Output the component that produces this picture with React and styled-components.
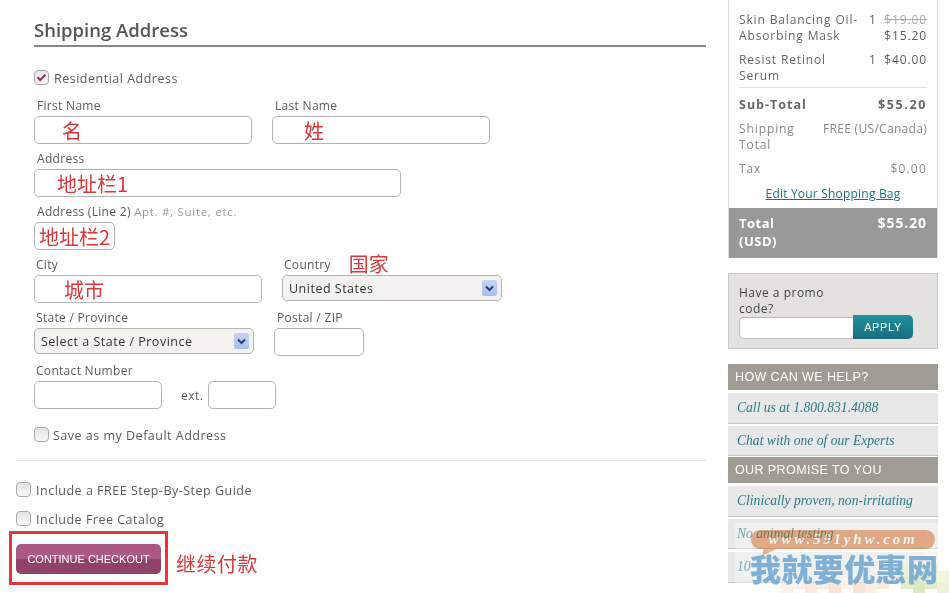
import React from 'react'
import styled, { createGlobalStyle } from 'styled-components'

const GlobalStyle = createGlobalStyle`
  html, body { margin: 0; padding: 0; background: #fff; }
  body {
    width: 950px;
    height: 593px;
    overflow: hidden;
    font-family: "Open Sans", "Noto Sans CJK SC", sans-serif;
    font-size: 12px;
    letter-spacing: .5px;
    color: #5a5a5a;
  }
  * { box-sizing: border-box; }
`

const cjk = '"Noto Sans CJK SC", "Liberation Sans", sans-serif'

const Page = styled.div`
  display: flex;
  align-items: flex-start;
  height: 593px;
  position: relative;
  overflow: hidden;
`

const Main = styled.main`
  width: 706px;
  padding-left: 16px;
  flex: none;
`

const AddressBlock = styled.div`
  padding-left: 18px;
`

const Heading = styled.h2`
  margin: 0;
  padding-top: 18px;
  height: 47px;
  border-bottom: 2px solid #888;
  font-size: 18.5px;
  line-height: 24px;
  font-weight: 600;
  letter-spacing: 0;
  color: #555;
`

const CheckRow = styled.label`
  display: flex;
  align-items: center;
  gap: ${p => p.$gap || 5}px;
  height: 16px;
  margin-top: ${p => p.$top}px;
  margin-bottom: ${p => p.$bottom || 0}px;
`

const Box = styled.span`
  width: 15px;
  height: 15px;
  flex: none;
  border: 1px solid #a9a9a9;
  border-radius: 4px;
  background: linear-gradient(#e6e4e2, #f8f7f6);
  display: flex;
  align-items: center;
  justify-content: center;
`

const CheckText = styled.span`
  position: relative;
  top: 1px;
  font-size: 12.5px;
`

const Row = styled.div`
  display: flex;
  gap: ${p => p.$gap ?? 20}px;
  align-items: flex-end;
  height: ${p => p.$height || 53}px;
`

const FieldWrap = styled.div`
  width: ${p => p.$width}px;
  align-self: flex-start;
`

const Label = styled.div`
  display: flex;
  align-items: center;
  height: 18px;
  padding: 0 0 4px ${p => p.$pad ?? 3}px;
  white-space: pre;
  letter-spacing: .3px;
`

const Hint = styled.span`
  color: #999;
  font-size: 11.5px;
  letter-spacing: .7px;
`

const Note = styled.span`
  font-family: ${cjk};
  font-size: ${p => p.$size || 20}px;
  line-height: 28px;
  letter-spacing: 0;
  color: #d8383c;
  white-space: nowrap;
`

const LabelNote = styled(Note)`
  margin-left: 18px;
  line-height: 14px;
  position: relative;
`

const Input = styled.div`
  height: 28px;
  border: 1px solid #b4b4b4;
  border-radius: 5px;
  background: #fff;
  padding-left: ${p => p.$pad || 0}px;
  overflow: hidden;
`

const Select = styled.div`
  height: 26px;
  border: 1px solid #b4b4b4;
  border-radius: 5px;
  background: #f3f2ee;
  padding: 0 4px 0 6px;
  display: flex;
  align-items: center;
  justify-content: space-between;
  color: #333;
  font-size: 12.5px;
`

const Arrow = styled.span`
  width: 15px;
  height: 16px;
  border-radius: 2px;
  background: linear-gradient(#c4d3f4, #a9c0ee);
  display: flex;
  align-items: center;
  justify-content: center;
`

const Ext = styled.span`
  width: 46px;
  height: 28px;
  padding: 9px 0 0 19px;
  line-height: 14px;
  flex: none;
`

const Divider = styled.hr`
  margin: 18px 0 0;
  border: 0;
  border-top: 1px solid #e4e4e4;
`

const CtaRow = styled.div`
  display: flex;
  align-items: flex-end;
  gap: 8px;
  margin: 5px 0 0 -7px;
`

const CtaFrame = styled.div`
  width: 159px;
  height: 54px;
  border: 3px solid #e5343a;
  padding: 10px 0 0 4px;
`

const CtaButton = styled.button`
  width: 145px;
  height: 30px;
  padding: 0;
  border: 0;
  border-radius: 5px;
  background: linear-gradient(#ab5a82 0 50%, #914269 50% 100%);
  color: #fff;
  font-family: "Liberation Sans", sans-serif;
  font-size: 11px;
  letter-spacing: 0;
`

const CtaNote = styled(Note)`
  position: relative;
  top: -7px;
  letter-spacing: .5px;
`

const Sidebar = styled.aside`
  width: 210px;
  margin-left: 22px;
  flex: none;
`

const Summary = styled.section`
  height: 258px;
  border: solid #dedede;
  border-width: 0 1px;
  display: flex;
  flex-direction: column;
`

const Lines = styled.div`
  padding: 12px 10px 0;
  flex: 1;
  font-size: 12px;
  line-height: 16px;
`

const Item = styled.div`
  display: flex;
  margin-bottom: 8px;
`

const ItemName = styled.div`
  flex: 1;
  color: #666;
  letter-spacing: .85px;
  white-space: nowrap;
`

const Qty = styled.div`
  width: 14px;
  flex: none;
`

const Price = styled.div`
  width: 44px;
  flex: none;
  display: flex;
  flex-direction: column;
  align-items: flex-end;
  white-space: nowrap;
  letter-spacing: .9px;
`

const Was = styled.s`
  color: #aaa;
`

const ItemRule = styled.div`
  border-top: 1px solid #e2e2e2;
  margin: -5px 0 9px;
`

const SumLine = styled.div`
  display: flex;
  justify-content: space-between;
  margin-bottom: 8px;
  font-size: ${p => (p.$strong ? 12.5 : 12)}px;
  font-weight: ${p => (p.$strong ? 700 : 400)};
  color: ${p => (p.$strong ? '#666' : '#888')};
  letter-spacing: ${p => (p.$strong ? 1 : .9)}px;
`

const SumValue = styled.span`
  white-space: nowrap;
  letter-spacing: ${p => p.$spacing ?? .3}px;
`

const EditLink = styled.a`
  display: block;
  margin-top: 9px;
  text-align: center;
  color: #1c6f80;
  letter-spacing: .2px;
  text-decoration: underline;
`

const TotalBand = styled.div`
  height: 50px;
  background: #999;
  padding: 6px 10px 0;
  display: flex;
  justify-content: space-between;
  color: #fff;
  font-weight: 700;
  font-size: 13px;
  line-height: 18px;
`

const TotalValue = styled.span`
  font-size: 14px;
  letter-spacing: .9px;
`

const Promo = styled.form`
  height: 76px;
  margin-top: 15px;
  border: 1px solid #c9c9c9;
  background: #e3e2e0;
  padding: 11px 10px 0;
  line-height: 16px;
  color: #444;
`

const PromoText = styled.div`
  width: 100px;
`

const PromoControl = styled.div`
  display: flex;
  align-items: flex-end;
  margin-top: -2px;
`

const PromoInput = styled.div`
  width: 114px;
  height: 22px;
  background: #fff;
  border: 1px solid #bbb;
  border-right: 0;
  border-radius: 5px 0 0 5px;
`

const ApplyButton = styled.button`
  width: 60px;
  height: 24px;
  padding: 0;
  border: 0;
  border-radius: 0 5px 5px 0;
  background: linear-gradient(#22909f, #176d7d);
  color: #fff;
  font-family: "Liberation Sans", sans-serif;
  font-size: 11px;
  letter-spacing: .6px;
`

const Help = styled.section`
  margin-top: 15px;
`

const HelpTitle = styled.h3`
  margin: 1px 0 0;
  height: 26px;
  background: #a09c94;
  color: #fff;
  padding-left: 7px;
  font-family: "Liberation Sans", sans-serif;
  font-size: 12.5px;
  font-weight: 400;
  line-height: 26px;
  letter-spacing: .4px;
`

const HelpRow = styled.div`
  height: ${p => p.$height || 31}px;
  margin-top: ${p => p.$top ?? 2}px;
  background: #e8e8e8;
  border-bottom: 1px solid #c8c8c8;
  padding-left: 9px;
  color: #2a7d84;
  font-family: "Liberation Serif", serif;
  font-style: italic;
  font-size: 13.6px;
  line-height: 30px;
  letter-spacing: 0;
  white-space: nowrap;
`

const Watermark = styled.div`
  position: absolute;
  left: 735px;
  top: 523px;
  width: 215px;
  height: 70px;
  background: rgba(255, 255, 255, .35);
`

const Squares = styled.svg`
  position: absolute;
  left: 0;
  top: 0;
`

const Bubble = styled.div`
  position: absolute;
  left: 16px;
  top: 7px;
  width: 184px;
  height: 19px;
  border-radius: 9px;
  background: #ecb48c;
  color: #fff;
  mix-blend-mode: multiply;
  text-align: center;
  font-family: "Liberation Serif", serif;
  font-style: italic;
  font-weight: 700;
  font-size: 15px;
  line-height: 19px;
  letter-spacing: 2.8px;
  &::after {
    content: "";
    position: absolute;
    left: 12px;
    top: 19px;
    border-style: solid;
    border-width: 6px 14px 0 0;
    border-color: #ecb48c transparent transparent transparent;
  }
`

const WatermarkText = styled.div`
  position: absolute;
  left: 15px;
  top: 27px;
  font-family: ${cjk};
  font-weight: 900;
  font-size: 31px;
  line-height: 36px;
  letter-spacing: .4px;
  color: #7fb1d6;
  white-space: nowrap;
`

const tint = [
  [46, 60, '#fdf1e8'], [58, 54, '#fdf1e8'], [70, 60, '#fce9dc'], [82, 54, '#fdeee3'],
  [94, 60, '#fbe4d3'], [106, 54, '#fdf1e8'], [118, 60, '#fbe4d3'], [130, 60, '#fdeee3'],
  [142, 54, '#f7ead9'], [154, 48, '#fbe8d8'], [166, 42, '#eef1d8'], [178, 48, '#dfeac6'],
  [190, 42, '#e6edcf'], [202, 48, '#f4f4e0'], [166, 54, '#e3ecc9'], [178, 60, '#dce8c0'],
  [190, 54, '#e3ecc9'], [202, 60, '#eef1d8'], [178, 30, '#fdeee3'], [190, 30, '#fef4ec'],
]

function CheckMark() {
  return (
    <svg width="11" height="9" viewBox="0 0 11 9">
      <path d="M1.5 4.2 4.2 7 9.5 1.8" fill="none" stroke="#8e2d62" strokeWidth="2" />
    </svg>
  )
}

function Check({ checked, text, top, bottom, gap }) {
  return (
    <CheckRow $top={top} $bottom={bottom} $gap={gap}>
      <Box>{checked && <CheckMark />}</Box>
      <CheckText>{text}</CheckText>
    </CheckRow>
  )
}

function Field({ label, pad, width, inputPad, note }) {
  return (
    <FieldWrap $width={width}>
      <Label $pad={pad}>{label}</Label>
      <Input $pad={inputPad}>{note && <Note>{note}</Note>}</Input>
    </FieldWrap>
  )
}

function SelectField({ label, labelNote, value, width }) {
  return (
    <FieldWrap $width={width}>
      <Label $pad={2}>
        {label}
        {labelNote && <LabelNote>{labelNote}</LabelNote>}
      </Label>
      <Select>
        {value}
        <Arrow>
          <svg width="9" height="7" viewBox="0 0 9 7">
            <path d="M1 1.5 4.5 5 8 1.5" fill="none" stroke="#2b3f77" strokeWidth="2" />
          </svg>
        </Arrow>
      </Select>
    </FieldWrap>
  )
}

export default function App() {
  return (
    <Page>
      <GlobalStyle />
      <Main>
        <form>
          <AddressBlock>
            <Heading>Shipping Address</Heading>
            <Check checked text="Residential Address" top={22} bottom={13} />
            <Row>
              <Field label="First Name" width={218} inputPad={27} note="名" />
              <Field label="Last Name" width={218} inputPad={31} note="姓" />
            </Row>
            <Row>
              <Field label="Address" width={367} inputPad={22} note="地址栏1" />
            </Row>
            <Row>
              <FieldWrap $width={81}>
                <Label>Address (Line 2) <Hint>Apt. #, Suite, etc.</Hint></Label>
                <Input $pad={4}><Note>地址栏2</Note></Input>
              </FieldWrap>
            </Row>
            <Row>
              <Field label="City" pad={2} width={228} inputPad={29} note="城市" />
              <SelectField label="Country" labelNote="国家" value="United States" width={220} />
            </Row>
            <Row>
              <SelectField label="State / Province" value="Select a State / Province" width={220} />
              <Field label="Postal / ZIP" width={90} />
            </Row>
            <Row $gap={0} $height={45}>
              <Field label="Contact Number" pad={2} width={128} />
              <Ext>ext.</Ext>
              <FieldWrap $width={68}>
                <Label />
                <Input />
              </FieldWrap>
            </Row>
            <Check text="Save as my Default Address" top={18} gap={4} />
          </AddressBlock>
          <Divider />
          <Check text="Include a FREE Step-By-Step Guide" top={20} />
          <Check text="Include Free Catalog" top={13} />
        </form>
        <CtaRow>
          <CtaFrame>
            <CtaButton type="button">CONTINUE CHECKOUT</CtaButton>
          </CtaFrame>
          <CtaNote>继续付款</CtaNote>
        </CtaRow>
      </Main>
      <Sidebar>
        <Summary>
          <Lines>
            <Item>
              <ItemName>Skin Balancing Oil-<br />Absorbing Mask</ItemName>
              <Qty>1</Qty>
              <Price><Was>$19.00</Was><span>$15.20</span></Price>
            </Item>
            <Item>
              <ItemName>Resist Retinol<br />Serum</ItemName>
              <Qty>1</Qty>
              <Price>$40.00</Price>
            </Item>
            <ItemRule />
            <SumLine $strong>Sub-Total <SumValue $spacing={1.6}>$55.20</SumValue></SumLine>
            <SumLine><span>Shipping<br />Total</span> <SumValue>FREE (US/Canada)</SumValue></SumLine>
            <SumLine>Tax <SumValue $spacing={1.2}>$0.00</SumValue></SumLine>
            <EditLink href="#bag">Edit Your Shopping Bag</EditLink>
          </Lines>
          <TotalBand>
            <span>Total<br />(USD)</span>
            <TotalValue>$55.20</TotalValue>
          </TotalBand>
        </Summary>
        <Promo>
          <PromoText>Have a promo code?</PromoText>
          <PromoControl>
            <PromoInput />
            <ApplyButton type="button">APPLY</ApplyButton>
          </PromoControl>
        </Promo>
        <Help>
          <HelpTitle>HOW CAN WE HELP?</HelpTitle>
          <HelpRow $top={3}>Call us at 1.800.831.4088</HelpRow>
          <HelpRow $height={30}>Chat with one of our Experts</HelpRow>
          <HelpTitle>OUR PROMISE TO YOU</HelpTitle>
          <HelpRow $top={3}>Clinically proven, non-irritating</HelpRow>
          <HelpRow $height={30}>No animal testing</HelpRow>
          <HelpRow $top={3}>10</HelpRow>
        </Help>
      </Sidebar>
      <Watermark>
        <Squares width="215" height="70" viewBox="0 0 215 70">
          {tint.map(([x, y, fill]) => (
            <rect key={`${x}-${y}`} x={x} y={y} width="12" height="12" fill={fill} />
          ))}
        </Squares>
        <Bubble>www.591yhw.com</Bubble>
        <WatermarkText>我就要优惠网</WatermarkText>
      </Watermark>
    </Page>
  )
}
